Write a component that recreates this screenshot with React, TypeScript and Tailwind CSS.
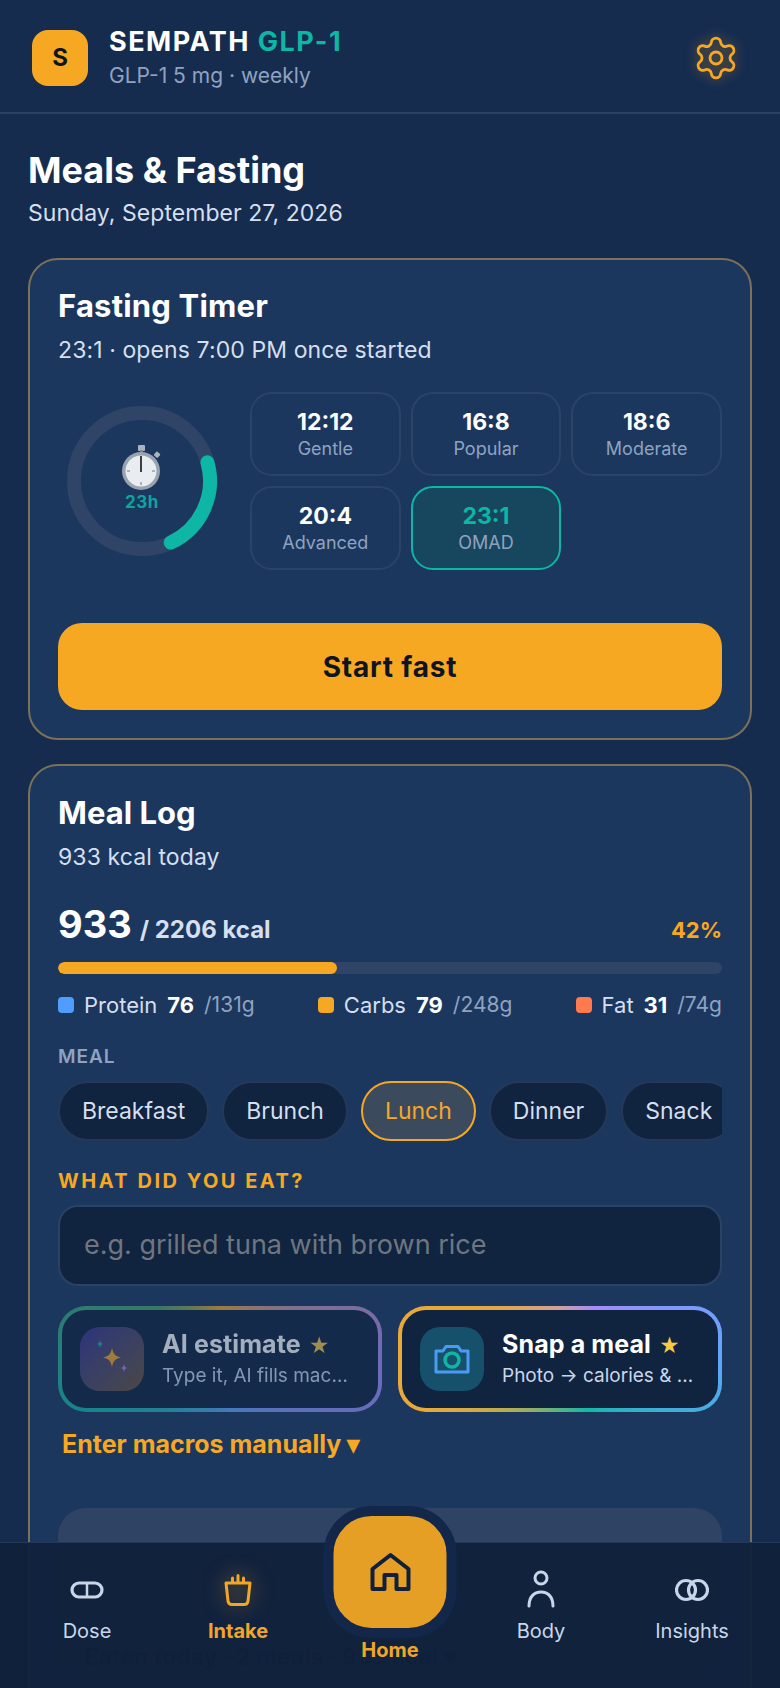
import { Settings } from "lucide-react";

const fontStack = { fontFamily: "Inter, 'Liberation Sans', sans-serif" };

const presets = [
  { ratio: "12:12", label: "Gentle" },
  { ratio: "16:8", label: "Popular" },
  { ratio: "18:6", label: "Moderate" },
  { ratio: "20:4", label: "Advanced" },
  { ratio: "23:1", label: "OMAD", active: true },
];

const meals = ["Breakfast", "Brunch", "Lunch", "Dinner", "Snack"];

const macros = [
  { name: "Protein", value: "76", goal: "/131g", color: "bg-[#4f9dff]" },
  { name: "Carbs", value: "79", goal: "/248g", color: "bg-[#f7a823]" },
  { name: "Fat", value: "31", goal: "/74g", color: "bg-[#ff7a4d]" },
];

function FastingRing() {
  return (
    <div className="relative w-[150px] h-[150px] shrink-0 ml-[9px]">
      <svg width="150" height="150" viewBox="0 0 150 150">
        <circle cx="75" cy="75" r="68" fill="none" stroke="#2f4466" strokeWidth="14" />
        <path d="M140.4 56.3A68 68 0 0 1 103.7 136.6" fill="none" stroke="#0db6a5" strokeWidth="14" strokeLinecap="round" />
      </svg>
      <div className="absolute inset-0 flex flex-col items-center pt-[39px]">
        <svg width="44" height="46" viewBox="0 0 44 46">
          <rect x="18" y="0" width="7" height="6" rx="1" fill="#a9b4c0" />
          <rect x="20" y="5" width="3" height="4" fill="#7d8994" />
          <rect x="35" y="7" width="5" height="5" rx="1" transform="rotate(40 37 9)" fill="#a9b4c0" />
          <circle cx="21" cy="26" r="19" fill="#98a4b0" />
          <circle cx="21" cy="26" r="15.5" fill="#e9edf1" />
          <g fill="#6f7a86">
            <rect x="20.5" y="12" width="1" height="3" />
            <rect x="20.5" y="37" width="1" height="3" />
            <rect x="7" y="25.5" width="3" height="1" />
            <rect x="32" y="25.5" width="3" height="1" />
          </g>
          <rect x="20" y="11" width="2" height="16" fill="#3b3f45" />
        </svg>
        <span className="text-[17px] leading-[20px] font-bold tracking-[0.5px] text-[#0fa3a0] mt-[1px]">23h</span>
      </div>
    </div>
  );
}

function PillIcon() {
  return (
    <svg width="36" height="18" viewBox="0 0 36 18" fill="none" stroke="#c9d6ea" strokeWidth="3.2">
      <rect x="3" y="2" width="30" height="14" rx="7" />
      <path d="M18 2v14" strokeWidth="2.5" />
    </svg>
  );
}

function CupIcon() {
  return (
    <svg width="30" height="36" viewBox="0 0 30 36" fill="none" stroke="#f0a62a" strokeWidth="3" strokeLinecap="round" strokeLinejoin="round" className="drop-shadow-[0_0_10px_rgba(247,168,35,0.55)]">
      <path d="M3 11h24l-2 18a4 4 0 0 1-4 3.500h-12a4 4 0 0 1-4-3.500z" />
      <path d="M9.500 10V6M15 10V3.500M20.500 10V6" />
    </svg>
  );
}

function BodyIcon() {
  return (
    <svg width="30" height="40" viewBox="0 0 30 40" fill="none" stroke="#c9d6ea" strokeWidth="3" strokeLinecap="round">
      <circle cx="15" cy="8" r="6" />
      <path d="M3 36c0-9 5-14 12-14s12 5 12 14" />
    </svg>
  );
}

function InsightsIcon() {
  return (
    <svg width="34" height="24" viewBox="0 0 34 24" fill="none" stroke="#c9d6ea" strokeWidth="3.200">
      <circle cx="11" cy="12" r="9.500" />
      <circle cx="23" cy="12" r="9.500" />
    </svg>
  );
}

function HomeIcon() {
  return (
    <svg width="42" height="40" viewBox="0 0 42 40" fill="none" stroke="#10203c" strokeWidth="4" strokeLinejoin="round">
      <path d="M3 37V17L21 3l18 14v20H27V23H15v14z" />
    </svg>
  );
}

function Sparkles() {
  return (
    <svg width="64" height="64" viewBox="0 0 64 64">
      <path d="M32 21c1.200 6 3 8 9 9.500-6 1.500-7.800 3.500-9 9.500-1.200-6-3-8-9-9.500 6-1.500 7.800-3.500 9-9.500z" fill="#f7a823" />
      <path d="M20 13c.5 2.500 1 3.200 3 4-2 .8-2.500 1.500-3 4-.5-2.500-1-3.200-3-4 2-.8 2.500-1.500 3-4z" fill="#14b8a6" />
      <path d="M44 37c.5 2.500 1 3.200 3 4-2 .8-2.500 1.500-3 4-.5-2.500-1-3.200-3-4 2-.8 2.500-1.500 3-4z" fill="#a78bfa" />
    </svg>
  );
}

function CameraIcon() {
  return (
    <svg width="36" height="30" viewBox="0 0 36 30" fill="none">
      <path d="M2 7h7l3-4.500h12L27 7h7v21H2z" stroke="#4b9bf5" strokeWidth="3" strokeLinejoin="round" />
      <circle cx="18" cy="16" r="7" stroke="#0db6a5" strokeWidth="3.500" />
    </svg>
  );
}

function NavItem({ label, active, children }: { label: string; active?: boolean; children: React.ReactNode }) {
  return (
    <div className="flex flex-col items-center">
      <div className="h-[44px] mt-[25px] flex items-center justify-center">{children}</div>
      <span className={`text-[20px] leading-[24px] mt-[7px] ${active ? "font-bold text-[#f0a62a]" : "text-[#c9d6ea]"}`}>{label}</span>
    </div>
  );
}

function BottomNav() {
  return (
    <nav className="absolute bottom-0 left-0 right-0 h-[146px] bg-[#10213b]/[0.95] border-t border-[#24395a]">
      <div className="grid grid-cols-[174px_128px_176px_126px_176px] h-full">
        <NavItem label="Dose"><PillIcon /></NavItem>
        <NavItem label="Intake" active><CupIcon /></NavItem>
        <div />
        <NavItem label="Body"><BodyIcon /></NavItem>
        <NavItem label="Insights"><InsightsIcon /></NavItem>
      </div>
      <div className="absolute left-1/2 -translate-x-1/2 -top-[37px] flex flex-col items-center">
        <div className="w-[113px] h-[112px] box-content border-[10px] border-[#13274a] rounded-[48px] bg-[#e59f24] flex items-center justify-center">
          <HomeIcon />
        </div>
        <span className="text-[20px] leading-[24px] font-bold text-[#f0a62a] mt-[0px]">Home</span>
      </div>
    </nav>
  );
}

export default function App() {
  return (
    <div className="relative w-[780px] h-[1688px] overflow-hidden bg-[#162c4f] text-white" style={fontStack}>
      <header className="h-[114px] pt-[4px] flex items-center justify-between pl-[32px] pr-[40px] border-b-2 border-[#2a4263]">
        <div className="flex items-center gap-[21px]">
          <div className="w-[56px] h-[56px] rounded-[16px] bg-[#f7a823] flex items-center justify-center text-[#0f1520] text-[24px] font-bold">S</div>
          <div>
            <div className="text-[27px] leading-[32px] font-bold tracking-[1.500px]">SEMPATH <span className="text-[#0db6a5]">GLP-1</span></div>
            <div className="text-[21px] leading-[28px] text-[#8fa3c0] mt-[4px]">GLP-1 5 mg · weekly</div>
          </div>
        </div>
        <Settings size={48} strokeWidth={1.4} className="text-[#f7a823] drop-shadow-[0_0_6px_rgba(247,168,35,0.5)]" />
      </header>

      <main className="px-[28px] pt-[34px]">
        <h1 className="text-[36px] leading-[44px] font-bold">Meals &amp; Fasting</h1>
        <p className="text-[23px] leading-[32px] text-[#d5dfee] mt-[5px] tracking-[0.05px]">Sunday, September 27, 2026</p>

        <section className="mt-[29px] rounded-[30px] border-2 border-[#7b7059] bg-[#1c375e] px-[28px] pt-[26px] pb-[28px]">
          <h2 className="text-[31px] leading-[40px] font-bold tracking-[0.2px]">Fasting Timer</h2>
          <p className="text-[23px] leading-[32px] text-[#d5dfee] mt-[8px] tracking-[0.1px]">23:1 · opens 7:00 PM once started</p>
          <div className="flex items-center justify-between mt-[26px]">
            <FastingRing />
            <div className="grid grid-cols-3 gap-[10px] w-[472px]">
              {presets.map((p) => (
                <div key={p.ratio} className={`h-[84px] rounded-[22px] border-2 flex flex-col items-center justify-center ${p.active ? "border-[#0db6a5] bg-[#17475f]" : "border-[#2a4468]"}`}>
                  <span className={`text-[23px] leading-[30px] font-bold ${p.active ? "text-[#0db6a5]" : "text-white"}`}>{p.ratio}</span>
                  <span className="text-[18px] leading-[24px] text-[#8fa3c0]">{p.label}</span>
                </div>
              ))}
            </div>
          </div>
          <button className="w-full h-[87px] rounded-[24px] bg-[#f7a823] text-[#0f1520] text-[28px] font-bold tracking-[0.8px] mt-[53px]">Start fast</button>
        </section>

        <section className="mt-[24px] rounded-[30px] border-2 border-[#7b7059] bg-[#1c375e] px-[28px] pt-[27px] h-[960px]">
          <h2 className="text-[31px] leading-[40px] font-bold">Meal Log</h2>
          <p className="text-[23px] leading-[32px] text-[#d5dfee] mt-[8px] tracking-[0.1px]">933 kcal today</p>
          <div className="flex items-baseline justify-between mt-[26px]">
            <div className="flex items-baseline gap-[8px]">
              <span className="text-[38px] leading-[50px] font-bold">933</span>
              <span className="text-[24px] font-bold text-[#d5dfee]">/ 2206 kcal</span>
            </div>
            <span className="text-[22px] font-bold text-[#f7a823]">42%</span>
          </div>
          <div className="h-[12px] rounded-full bg-[#2f4466] mt-[13px] overflow-hidden">
            <div className="h-full w-[42%] rounded-full bg-[#f7a823]" />
          </div>
          <div className="flex justify-between mt-[16px]">
            {macros.map((m) => (
              <div key={m.name} className="flex items-center text-[22px] leading-[30px]">
                <span className={`w-[16px] h-[16px] rounded-[4px] mr-[10px] ${m.color}`} />
                <span className="text-[#d5dfee] text-[22px]">{m.name}</span>
                <span className="font-bold ml-[10px]">{m.value}</span>
                <span className="text-[#8fa3c0] ml-[10px] text-[21px]">{m.goal}</span>
              </div>
            ))}
          </div>
          <div className="text-[19px] leading-[24px] font-semibold tracking-[1px] text-[#8fa3c0] mt-[25px]">MEAL</div>
          <div className="flex gap-[13px] mt-[12px] overflow-hidden">
            {meals.map((m) => (
              <div key={m} className={`h-[60px] px-[22px] shrink-0 rounded-full border-2 flex items-center text-[23px] ${m === "Lunch" ? "border-[#f7a823] bg-[#3c4a5e] text-[#f7a823]" : "border-[#24395a] bg-[#10233f] text-[#d5dfee]"}`}>{m}</div>
            ))}
          </div>
          <div className="text-[20px] leading-[26px] font-bold tracking-[2.500px] text-[#f7a823] mt-[27px]">WHAT DID YOU EAT?</div>
          <div className="h-[81px] rounded-[20px] border-2 border-[#2a4263] bg-[#10233f] flex items-center px-[24px] text-[27px] text-[#6f7680] mt-[11px]">e.g. grilled tuna with brown rice</div>

          <div className="grid grid-cols-2 gap-[16px] mt-[20px]">
            <div className="opacity-60 rounded-[28px] p-[4px] bg-[conic-gradient(#f7a823_0deg,#a78bfa_90deg,#60a5fa_170deg,#14b8a6_250deg,#4fa36a_310deg,#f7a823_360deg)]">
              <div className="h-[98px] rounded-[24px] bg-[#10233f] flex items-center pl-[18px] gap-[18px]">
                <div className="w-[64px] h-[64px] shrink-0 rounded-[20px] bg-gradient-to-br from-[#3b2f8f] to-[#6b5230]"><Sparkles /></div>
                <div className="min-w-0">
                  <div className="text-[25px] leading-[30px] font-bold tracking-[0.1px]">AI estimate <span className="text-[#f7c948] text-[20px] ml-[2px]">★</span></div>
                  <div className="text-[19px] leading-[26px] mt-[2px] text-[#c9d6ea] w-[191px] truncate">Type it, AI fills macros</div>
                </div>
              </div>
            </div>
            <div className="rounded-[28px] p-[4px] bg-[conic-gradient(#d0a0a0_0deg,#a78bfa_35deg,#60a5fa_90deg,#14b8a6_150deg,#e8a93a_250deg,#e8a93a_300deg,#d0a0a0_360deg)]">
              <div className="h-[98px] rounded-[24px] bg-[#10233f] flex items-center pl-[18px] gap-[18px]">
                <div className="w-[64px] h-[64px] shrink-0 rounded-[20px] bg-[#17506b] flex items-center justify-center"><CameraIcon /></div>
                <div className="min-w-0">
                  <div className="text-[25px] leading-[30px] font-bold tracking-[0.1px]">Snap a meal <span className="text-[#f7c948] text-[20px] ml-[2px]">★</span></div>
                  <div className="text-[19px] leading-[26px] mt-[2px] text-[#c9d6ea] w-[193px] truncate">Photo → calories &amp; macros</div>
                </div>
              </div>
            </div>
          </div>

          <div className="text-[25px] leading-[30px] font-bold text-[#f7a823] ml-[4px] mt-[17px]">Enter macros manually ▾</div>

          <div className="h-[172px] rounded-[28px] bg-[#2f4365] mt-[49px] flex items-end pb-[6px] pl-[27px]">
            <span className="text-[23px] font-bold text-[#0f1f38]">Eaten today · 2 meals · 933 kcal ▾</span>
          </div>
        </section>
      </main>

      <BottomNav />
    </div>
  );
}
